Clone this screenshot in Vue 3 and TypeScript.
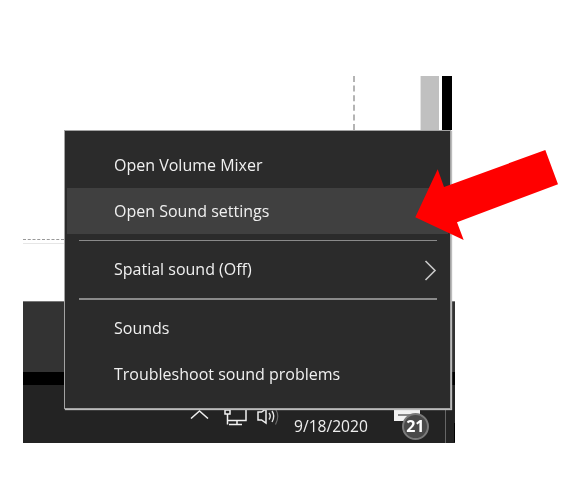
<script setup lang="ts">
interface MenuItem { id: string; label: string; hover?: boolean; sub?: boolean; divider?: boolean }
const items: MenuItem[] = [
  { id: 'mixer', label: 'Open Volume Mixer' },
  { id: 'settings', label: 'Open Sound settings', hover: true },
  { id: 'd1', label: '', divider: true },
  { id: 'spatial', label: 'Spatial sound (Off)', sub: true },
  { id: 'd2', label: '', divider: true },
  { id: 'sounds', label: 'Sounds' },
  { id: 'trouble', label: 'Troubleshoot sound problems' },
]
</script>

<template>
  <div class="stage">
    <div class="window">
      <div class="dash-v"></div>
      <div class="col-gray"></div>
      <div class="col-black"></div>
      <div class="dash-h"></div>
    </div>
    <div class="taskbar">
      <div class="band-gray"></div>
      <div class="band-black"></div>
      <div class="tray">
        <svg class="chev" width="19" height="9" viewBox="0 0 19 9"><path d="M1 8.5 L9.5 1 L18 8.5" fill="none" stroke="#eee" stroke-width="1.5"/></svg>
        <svg class="net" width="24" height="17" viewBox="0 0 24 17"><path d="M1 1H6V5H1ZM3.5 5V15.5M3.5 11.5H22V0M13 11.5V15.5M5 15.5H18" fill="none" stroke="#f2f2f2" stroke-width="1.5"/></svg>
        <svg class="spk" width="24" height="16" viewBox="0 0 24 16"><path d="M1 3H4.5L9 0V14L4.5 11H1Z" fill="none" stroke="#f0f0f0" stroke-width="1.5"/><path d="M12 4Q14.5 7 12 10.5M15 2Q18.5 7 15 13" fill="none" stroke="#e4e4e4" stroke-width="1.4"/><path d="M18.5 0Q23 7 18.5 15.5" fill="none" stroke="#6a6a6a" stroke-width="1.2"/></svg>
        <span class="date">9/18/2020</span>
        <div class="notif">
          <span class="note"><span class="note-line"></span></span>
          <span class="badge">21</span>
        </div>
        <span class="sep"></span>
        <span class="tick"></span>
      </div>
    </div>

    <div class="menu">
      <template v-for="item in items" :key="item.id">
        <div v-if="item.divider" class="divider"></div>
        <div v-else class="row" :class="{ hover: item.hover }">
          <span class="label">{{ item.label }}</span>
          <svg v-if="item.sub" class="caret" width="13" height="21" viewBox="0 0 13 21"><path d="M1.5 1 L11 10.5 L1.5 20" fill="none" stroke="#c8c8c8" stroke-width="1.6"/></svg>
        </div>
      </template>
    </div>

    <svg class="arrow" width="572" height="491" viewBox="0 0 572 491">
      <polygon points="415.3,217.3 437.7,169.3 444,187 545.3,150 558,184.3 457,222.3 463.7,240" fill="#ff0000"/>
    </svg>
  </div>
</template>

<style>
html, body { margin: 0; background: #fff; }
</style>

<style scoped>
.stage { position: relative; width: 572px; height: 491px; overflow: hidden; background: #fff; padding-top: 76px; box-sizing: border-box; font-family: "Open Sans", "Noto Sans", sans-serif; }
.window { margin-left: 23px; width: 430px; height: 225px; display: flex; align-items: flex-start; position: relative; }
.dash-v { margin-left: 330px; width: 0; height: 54px; border-left: 2px dashed #b4b4b4; }
.col-gray { margin-left: 66px; width: 18px; height: 54px; background: #c0c0c0; box-shadow: -1px 0 0 #e4e4e4; }
.col-black { margin-left: 3px; width: 10px; height: 54px; background: #000; }
.dash-h { position: absolute; left: 0; top: 163px; width: 41px; height: 3px; border-top: 1px dashed #999; border-bottom: 1px solid #e6e6e6; }
.taskbar { margin-left: 23px; width: 432px; height: 142px; display: flex; flex-direction: column; background: #232323; }
.band-gray { height: 71px; background: #333; border-top: 1px solid #777; box-sizing: border-box; }
.band-black { height: 13px; background: #000; }
.tray { flex: 1; display: flex; align-items: flex-start; position: relative; padding-left: 167px; color: #eee; }
.chev { margin-top: 25px; filter: blur(0.3px); }
.net { margin: 24px 0 0 15px; filter: blur(0.3px); }
.spk { margin: 24px 0 0 9px; filter: blur(0.3px); }
.date { margin: 31px 0 0 13px; font-size: 15.6px; line-height: 20px; filter: blur(0.35px); }
.notif { position: relative; width: 30px; height: 58px; margin-left: 26px; }
.note { position: absolute; left: 0; top: 25px; width: 26px; height: 11px; background: #f2f2f2; }
.note-line { position: absolute; left: 4px; right: 4px; top: 4px; height: 2px; background: #888; }
.badge { position: absolute; left: 8px; top: 28px; width: 27px; height: 27px; box-sizing: border-box; border-radius: 50%; background: #4a4a4a; border: 2px solid #7a7a7a; color: #fff; font-size: 16px; font-weight: 700; line-height: 23px; text-align: center; filter: blur(0.3px); }
.sep { position: absolute; left: 422px; top: 24px; bottom: 0; width: 1px; background: #666; }
.tick { position: absolute; left: 431px; top: 38px; bottom: 1px; width: 1px; background: #000; }
.menu { position: absolute; left: 64px; top: 130px; width: 387px; height: 279px; box-sizing: border-box; padding: 11px 2px 0; background: #2b2b2b; border: 1.5px solid #a3a3a3; color: #f0f0f0; font-size: 16px; box-shadow: 1px 1px 1px #bbb; }
.row { height: 46px; box-sizing: border-box; display: flex; align-items: center; justify-content: space-between; padding: 0 11px 1px 47px; }
.row.hover { background: #404040; }
.label { filter: blur(0.35px); }
.divider { height: 1.5px; margin: 5.5px 11.5px; background: #8a8a8a; }
.caret { display: block; margin-top: 2px; }
.arrow { position: absolute; left: 0; top: 0; pointer-events: none; }
</style>
